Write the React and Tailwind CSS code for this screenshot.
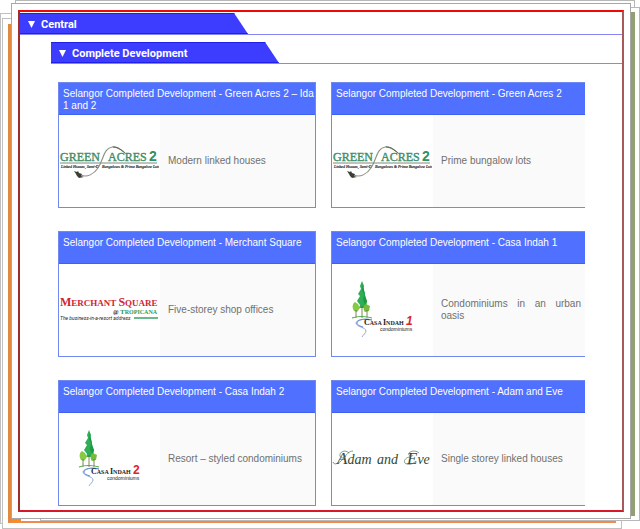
import { useState } from "react";
import clsx from "clsx";

function GreenAcresLogo() {
  return (
    <svg viewBox="0 0 100 92" className="w-[100px] h-[92px]" role="img" aria-label="Green Acres 2">
      <g fontFamily="'Liberation Serif', serif" fontSize="12" fill="#3f8f68" stroke="#3f8f68" strokeWidth="0.4">
        <text x="1" y="46">GREEN</text>
        <text x="49" y="46">ACRES</text>
      </g>
      <text x="90" y="46" fontSize="14" fontWeight="700" fontFamily="'Liberation Sans', sans-serif" fill="#2f9060">2</text>
      <path d="M1 48H98" stroke="#7d8a80" strokeWidth="1" />
      <g fontFamily="'Liberation Serif', serif" fontSize="4" fontStyle="italic" fill="#222" stroke="#222" strokeWidth="0.15">
        <text x="2" y="53">Linked Houses, Semi-D</text>
        <text x="43" y="53">Bungalows &amp; Prime Bungalow Lots</text>
      </g>
      <path d="M65 37C61 34 57 31 53 32C44 34 45 44 39 53C35 59 28 63 22 60" fill="none" stroke="#8b917f" strokeWidth="1.1" />
      <path d="M54 32C60 32 62 35 66 38" fill="none" stroke="#555c48" strokeWidth="0.9" />
      <path d="M15 56l3 1 1-1 1 2 3 1-1 2 3 1-5 1-2-2-1-2z" fill="#3a3f34" />
    </svg>
  );
}

function MerchantSquareLogo() {
  return (
    <svg viewBox="0 0 100 92" className="w-[100px] h-[92px]" role="img" aria-label="Merchant Square">
      <g fontFamily="'Liberation Serif', serif" fontWeight="700">
        <text x="1" y="42" fontSize="9" fill="#cf2435">
          <tspan fontSize="12">M</tspan>ERCHANT <tspan fontSize="12">S</tspan>QUARE
        </text>
        <text x="54" y="50" fontSize="6" fill="#2c9a5b">
          <tspan fill="#333">@</tspan> <tspan fontSize="7">T</tspan>ROPICANA
        </text>
      </g>
      <text x="1" y="56" fontSize="5" fontStyle="italic" fontFamily="Roboto, sans-serif" fill="#222">
        The business-in-a-resort address
      </text>
      <path d="M75 54H99" stroke="#2c9a5b" strokeWidth="1.4" />
    </svg>
  );
}

function CasaIndahLogo({ number, slanted }) {
  return (
    <svg viewBox="0 0 100 92" className="w-[100px] h-[92px]" role="img" aria-label={`Casa Indah ${number}`}>
      <path d="M30 17L28 22L29 25L26 30L28 32L25 37L28 41L27 44H34L33 40L35 37L32 33L33 29L31 25L32 22Z" fill="#2fae55" />
      <path d="M31 20L30 26L32 30L31 36L34 43L35 37L33 31Z" fill="#1c9a44" />
      <path d="M23 38C20 40 20 44 22 47L25 48L28 44L26 40Z" fill="#86c943" />
      <path d="M34 40C31 42 31 46 33 48L37 47L38 42Z" fill="#74bd3c" />
      <path d="M24 46V54M30 42V54M35 46V54" stroke="#5a6b35" strokeWidth="0.8" />
      <path d="M20 54C25 52 34 52 40 54" fill="none" stroke="#55a845" strokeWidth="1.2" />
      <path d="M40 56C32 54 24 56 24 59C24 63 34 63 34 67C34 69 31 71 30 73" fill="none" stroke="#8fa9dc" strokeWidth="1" />
      <path d="M40 56C32 54 25 56 25 59C25 61 28 62 31 63" fill="none" stroke="#6388cf" strokeWidth="1" />
      <text x="32" y="61" fontSize="6" fontFamily="'Liberation Serif', serif" fontWeight="700" fill="#222">
        <tspan fontSize="8">C</tspan>ASA <tspan fontSize="8">I</tspan>NDAH
      </text>
      <text
        x="74"
        y="61"
        fontSize="12"
        fontStyle={slanted ? "italic" : "normal"}
        fontFamily="'Liberation Sans', sans-serif"
        fontWeight="700"
        fill="#e0222e"
      >
        {number}
      </text>
      <text x="48" y="67" fontSize="5" fontFamily="'Liberation Sans', sans-serif" fill="#222">
        condominiums
      </text>
    </svg>
  );
}

function AdamAndEveLogo() {
  return (
    <svg viewBox="0 0 100 92" className="w-[100px] h-[92px]" role="img" aria-label="Adam and Eve">
      <g fontFamily="'Liberation Serif', serif" fontStyle="italic" fontSize="14" fill="#2f4a35">
        <text x="5" y="51">
          <tspan fontSize="17">A</tspan>dam
        </text>
        <text x="45" y="51">and</text>
        <text x="75" y="51">
          <tspan fontSize="17">E</tspan>ve
        </text>
      </g>
      <path d="M17 40C13 36 7 39 8 43C9 46 13 45 14 43M1 49C2 53 8 50 11 46C14 42 17 38 21 38" fill="none" stroke="#52705a" strokeWidth="0.7" />
      <path d="M87 40C83 36 75 39 77 42C78 44 81 43 81 42M78 44C73 44 70 50 75 51C79 52 82 50 84 48" fill="none" stroke="#52705a" strokeWidth="0.7" />
    </svg>
  );
}

const developments = [
  { name: "Green Acres 2 – Ida 1 and 2", text: "Modern linked houses", logo: <GreenAcresLogo /> },
  { name: "Green Acres 2", text: "Prime bungalow lots", logo: <GreenAcresLogo /> },
  { name: "Merchant Square", text: "Five-storey shop offices", logo: <MerchantSquareLogo /> },
  { name: "Casa Indah 1", text: "Condominiums in an urban oasis", logo: <CasaIndahLogo number="1" slanted /> },
  { name: "Casa Indah 2", text: "Resort – styled condominiums", logo: <CasaIndahLogo number="2" /> },
  { name: "Adam and Eve", text: "Single storey linked houses", logo: <AdamAndEveLogo /> },
];

function DevelopmentCard({ item }) {
  return (
    <article className="flex flex-col border border-[#7088f0] even:border-r-0">
      <h3 className="h-8 shrink-0 border-b border-[#4060f0] bg-[#5070ff] pt-[5px] pl-1 text-[10px] leading-3 text-white">
        Selangor Completed Development - {item.name}
      </h3>
      <div className="flex">
        <div className="w-[101px] shrink-0 bg-white">{item.logo}</div>
        <div className="flex flex-1 items-center bg-[#fafafa] pl-2 pr-1">
          <p className="w-full text-justify text-[10px] leading-3 text-[#707070]">{item.text}</p>
        </div>
      </div>
    </article>
  );
}

function Section({ title, className, children }) {
  const [open, setOpen] = useState(true);

  return (
    <section>
      <div className={clsx("border-b border-[#8585f5]", className)}>
        <button
          type="button"
          aria-expanded={open}
          onClick={() => setOpen(!open)}
          className="flex h-[21px] w-[228px] items-center gap-[6px] border-y border-[#2020e8] bg-[#3d3dff] pt-[2px] pl-2 text-left font-[Roboto,sans-serif] text-[11px] leading-3 font-bold text-white [clip-path:polygon(0_0,calc(100%-14px)_0,100%_100%,0_100%)]"
        >
          <svg viewBox="0 0 7 7" className={clsx("size-[7px]", !open && "-rotate-90")} aria-hidden="true">
            <path d="M0 0H7L3.5 7Z" fill="currentColor" />
          </svg>
          {title}
        </button>
      </div>
      {open && children}
    </section>
  );
}

function App() {
  return (
    <div className="relative min-h-screen overflow-hidden bg-white pt-[3px] pr-[9px] pb-[10px] pl-[11px] font-['Liberation_Sans',Arial,sans-serif]">
      {/* Loose sheets stacked under the page */}
      <div className="absolute top-[13px] bottom-[5px] left-0 w-10 border border-[#c0c0c0] bg-white" />
      <div className="absolute top-[18px] right-[18px] bottom-0 left-[2px] border border-[#c0c0c0] bg-white p-[5px]">
        <div className="flex h-full items-end border-b-2 border-l-4 border-b-[#f08a50] border-l-[#e08a40]">
          <div className="h-[2px] w-[9px] bg-[#ff8a1c]" />
        </div>
      </div>
      <div className="absolute top-0 right-[5px] bottom-10 left-[15px] border border-[#b8b8b8] bg-white" />
      <div className="absolute top-[7px] right-0 bottom-2 left-10 border border-[#b8b8b8] bg-white py-1 pr-1">
        <div className="h-full border-r-4 border-[#90a070]" />
      </div>

      <main className="relative border border-[#a8a8a8] bg-white p-[6px]">
        <div className="border-2 border-t-[#ee0808] border-r-[#a85a5a] border-b-[#d81828] border-l-[#a02c2c] pt-px pb-1">
          <Section title="Central">
            <div className="pt-[7px]">
              <Section title="Complete Development" className="ml-[31px]">
                <div className="grid grid-cols-[258fr_254fr] gap-x-[15px] gap-y-[23px] pt-[18px] pr-[37px] pl-[38px]">
                  {developments.map((item) => (
                    <DevelopmentCard key={item.name} item={item} />
                  ))}
                </div>
              </Section>
            </div>
          </Section>
        </div>
      </main>
    </div>
  );
}

export default App;
